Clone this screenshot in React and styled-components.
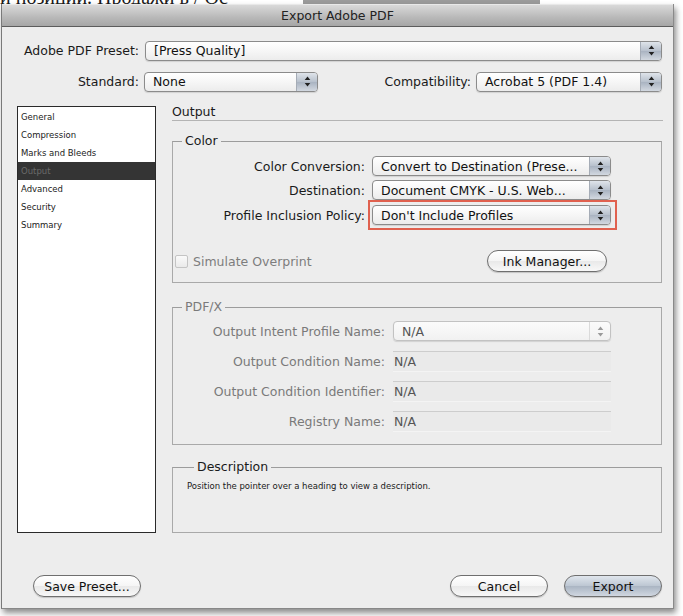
import styled, { createGlobalStyle, css } from "styled-components";

const Global = createGlobalStyle`
  html, body {
    margin: 0;
    padding: 0;
    background: #ffffff;
  }
  body {
    font-family: "DejaVu Sans", "Noto Sans", sans-serif;
    color: #1a1a1a;
  }
`;

const Page = styled.div`
  width: 683px;
  height: 616px;
  overflow: hidden;
  display: flex;
  flex-direction: column;
  background: #ffffff;
`;

/* bits of the document behind the dialog */
const Backdrop = styled.div`
  height: 4px;
  overflow: hidden;
  display: flex;
  align-items: flex-end;
  flex-shrink: 0;
`;

const BackdropText = styled.div`
  font-family: "Liberation Serif", serif;
  font-size: 20px;
  line-height: 20px;
  margin-bottom: -3px;
  white-space: nowrap;
  width: 303px;
  overflow: hidden;
`;

const BackdropBar = styled.div`
  width: 237px;
  height: 4px;
  background: #9b9b9b;
`;

const Window = styled.div`
  margin-left: 1px;
  width: 671px;
  height: 604px;
  flex-shrink: 0;
  display: flex;
  flex-direction: column;
  background: #ededed;
  border-left: 1px solid #7a7a7a;
  border-right: 1px solid #8a8a8a;
  border-bottom: 1px solid #888;
  box-shadow: 2px 4px 6px rgba(0, 0, 0, 0.45);
`;

const TitleBar = styled.div`
  height: 21px;
  flex-shrink: 0;
  display: flex;
  align-items: center;
  justify-content: center;
  font-size: 12.5px;
  color: #222;
  background: linear-gradient(#d9d9d9, #b8b8b8 60%, #a6a6a6);
  border-top: 1px solid #e8e8e8;
  border-bottom: 1px solid #5c5c5c;
`;

const Body = styled.div`
  flex: 1;
  display: flex;
  flex-direction: column;
  padding: 13px 11px 0 14px;
`;

const TopRow = styled.div`
  display: flex;
  align-items: center;
  height: 21px;
  margin-bottom: ${(p) => p.$gap || 0}px;
`;

const Label = styled.div`
  width: ${(p) => p.$w}px;
  flex-shrink: 0;
  text-align: right;
  font-size: 12.5px;
  white-space: nowrap;
  color: ${(p) => (p.$disabled ? "#7a7a7a" : "#1a1a1a")};
  margin-right: ${(p) => p.$gap ?? 6}px;
  margin-left: ${(p) => (p.$push ? "auto" : "0")};
`;

const SelectBox = styled.div`
  width: ${(p) => (p.$w ? `${p.$w}px` : "auto")};
  flex: ${(p) => (p.$w ? "0 0 auto" : "1")};
  height: 20px;
  box-sizing: border-box;
  display: flex;
  align-items: stretch;
  border: 1px solid ${(p) => (p.$disabled ? "#c2c2c2" : "#8b8b8b")};
  border-radius: 4px;
  background: ${(p) =>
    p.$disabled
      ? "linear-gradient(#fbfbfb, #f1f1f1)"
      : "linear-gradient(#ffffff, #f6f6f6 50%, #ececec)"};
  box-shadow: 0 1px 1px rgba(0, 0, 0, 0.12);
  overflow: hidden;
`;

const SelectValue = styled.div`
  flex: 1;
  display: flex;
  align-items: center;
  padding-left: 8px;
  font-size: 12.5px;
  white-space: nowrap;
  overflow: hidden;
  color: ${(p) => (p.$disabled ? "#555" : "#111")};
`;

const Stepper = styled.div`
  width: 20px;
  flex-shrink: 0;
  display: flex;
  align-items: center;
  justify-content: center;
  border-left: 1px solid ${(p) => (p.$disabled ? "#dadada" : "#a5acb6")};
  ${(p) =>
    p.$disabled
      ? css`
          background: transparent;
        `
      : css`
          background: linear-gradient(#dfe4ea, #b7c0cc 50%, #a9b3c1 51%, #d2d8e0);
        `}
`;

const Arrows = ({ disabled }) => (
  <svg width="7" height="11" viewBox="0 0 7 11">
    <path
      d="M3.5 0.5 L6.3 4 H0.7 Z M3.5 10.5 L6.3 7 H0.7 Z"
      fill={disabled ? "#9a9a9a" : "#222"}
    />
  </svg>
);

const Select = ({ value, w, disabled }) => (
  <SelectBox $w={w} $disabled={disabled}>
    <SelectValue $disabled={disabled}>{value}</SelectValue>
    <Stepper $disabled={disabled}>
      <Arrows disabled={disabled} />
    </Stepper>
  </SelectBox>
);

const Main = styled.div`
  display: flex;
  margin-top: 14px;
  gap: 16px;
`;

const SideList = styled.div`
  width: 139px;
  height: 427px;
  box-sizing: border-box;
  flex-shrink: 0;
  background: #ffffff;
  border: 1px solid #2a2a2a;
  padding-top: 1px;
  margin-left: 1px;
`;

const SideItem = styled.div`
  height: 18px;
  display: flex;
  align-items: center;
  padding-left: 3px;
  font-size: 8.5px;
  color: ${(p) => (p.$active ? "#6a6a6a" : "#222")};
  background: ${(p) => (p.$active ? "#343434" : "transparent")};
`;

const Content = styled.div`
  flex: 1;
  display: flex;
  flex-direction: column;
`;

const Heading = styled.div`
  font-size: 12.5px;
  line-height: 11px;
  padding-bottom: 3px;
  border-bottom: 1px solid #b4b4b4;
  margin-bottom: 12px;
  margin-right: -1px;
`;

const Group = styled.fieldset`
  margin: 0 0 ${(p) => p.$mb || 0}px 0;
  padding: ${(p) => p.$pad};
  border: 1px solid #a9a9a9;
  border-top-color: #9c9c9c;
  min-height: ${(p) => p.$h || 0}px;
  flex: ${(p) => (p.$fill ? 1 : "0 0 auto")};
  box-sizing: border-box;
`;

const Legend = styled.legend`
  padding: 0 3px;
  margin-left: 9px;
  font-size: 12.5px;
  line-height: 16px;
  color: ${(p) => (p.$disabled ? "#7a7a7a" : "#1a1a1a")};
`;

const FieldRow = styled.div`
  display: flex;
  align-items: center;
  height: ${(p) => p.$h || 24}px;
`;

const Highlight = styled.div`
  width: 241px;
  padding: 3px 2px 3px 2px;
  margin-left: -4px;
  border: 2px solid #e0614f;
  box-sizing: content-box;
`;

const OptionsRow = styled.div`
  display: flex;
  align-items: center;
  justify-content: space-between;
  margin-top: 22px;
  padding-right: 54px;
`;

const Check = styled.label`
  display: flex;
  align-items: center;
  gap: 5px;
  font-size: 12.5px;
  color: #7d7d7d;
  margin-left: 2px;
`;

const CheckBox = styled.span`
  width: 11px;
  height: 11px;
  border: 1px solid #c4c4c4;
  border-radius: 2px;
  background: linear-gradient(#fafafa, #eaeaea);
`;

const PillButton = styled.div`
  width: ${(p) => p.$w}px;
  height: 22px;
  box-sizing: border-box;
  display: flex;
  align-items: center;
  justify-content: center;
  font-size: 12.5px;
  color: #111;
  border: 1px solid #6f6f6f;
  border-radius: 11px;
  background: ${(p) =>
    p.$primary
      ? "linear-gradient(#e0e6ed, #bcc6d2 50%, #aab5c3 51%, #d0d7e0)"
      : "linear-gradient(#ffffff, #f5f5f5 50%, #e9e9e9 51%, #f8f8f8)"};
  box-shadow: 0 1px 1px rgba(0, 0, 0, 0.18);
`;

const TextField = styled.div`
  width: 218px;
  height: 21px;
  box-sizing: border-box;
  display: flex;
  align-items: center;
  padding-left: 1px;
  font-size: 12.5px;
  color: #555;
  background: #eaeaea;
  border-top: 1px solid #cdcdcd;
  border-bottom: 1px solid #f4f4f4;
`;

const DescText = styled.div`
  font-size: 8.5px;
  color: #1a1a1a;
  padding-left: 2px;
`;

const Footer = styled.div`
  margin-top: auto;
  display: flex;
  align-items: center;
  gap: 16px;
  padding: 0 0 11px 17px;
`;

const Spacer = styled.div`
  flex: 1;
`;

const sections = [
  "General",
  "Compression",
  "Marks and Bleeds",
  "Output",
  "Advanced",
  "Security",
  "Summary",
];

const pdfxRows = [
  { label: "Output Condition Name:", value: "N/A" },
  { label: "Output Condition Identifier:", value: "N/A" },
  { label: "Registry Name:", value: "N/A" },
];

export default function App() {
  return (
    <Page>
      <Global />
      <Backdrop>
        <BackdropText>и позиции. Продажи в / Ос</BackdropText>
        <BackdropBar />
      </Backdrop>
      <Window>
        <TitleBar>Export Adobe PDF</TitleBar>
        <Body>
          <TopRow $gap={10}>
            <Label $w={123}>Adobe PDF Preset:</Label>
            <Select value="[Press Quality]" />
          </TopRow>
          <TopRow>
            <Label $w={123} $gap={5}>
              Standard:
            </Label>
            <Select value="None" w={174} />
            <Label $w={120} $gap={5} $push>
              Compatibility:
            </Label>
            <Select value="Acrobat 5 (PDF 1.4)" w={186} />
          </TopRow>

          <Main>
            <SideList>
              {sections.map((s) => (
                <SideItem key={s} $active={s === "Output"}>
                  {s}
                </SideItem>
              ))}
            </SideList>

            <Content>
              <Heading>Output</Heading>

              <Group $pad="5px 0 10px 0" $mb={16} $h={144}>
                <Legend>Color</Legend>
                <FieldRow>
                  <Label $w={192} $gap={7}>
                    Color Conversion:
                  </Label>
                  <Select value="Convert to Destination (Prese..." w={239} />
                </FieldRow>
                <FieldRow>
                  <Label $w={192} $gap={7}>
                    Destination:
                  </Label>
                  <Select value="Document CMYK - U.S. Web..." w={239} />
                </FieldRow>
                <FieldRow $h={26}>
                  <Label $w={192} $gap={7}>
                    Profile Inclusion Policy:
                  </Label>
                  <Highlight>
                    <Select value="Don't Include Profiles" w={239} />
                  </Highlight>
                </FieldRow>
                <OptionsRow>
                  <Check>
                    <CheckBox />
                    Simulate Overprint
                  </Check>
                  <PillButton $w={120}>Ink Manager...</PillButton>
                </OptionsRow>
              </Group>

              <Group $pad="1px 0 8px 0" $mb={14} $h={145}>
                <Legend $disabled>PDF/X</Legend>
                <FieldRow $h={30}>
                  <Label $w={212} $gap={8} $disabled>
                    Output Intent Profile Name:
                  </Label>
                  <Select value="N/A" w={218} disabled />
                </FieldRow>
                {pdfxRows.map((r) => (
                  <FieldRow key={r.label} $h={30}>
                    <Label $w={212} $gap={8} $disabled>
                      {r.label}
                    </Label>
                    <TextField>{r.value}</TextField>
                  </FieldRow>
                ))}
              </Group>

              <Group $pad="6px 0 0 12px" $fill>
                <Legend>Description</Legend>
                <DescText>
                  Position the pointer over a heading to view a description.
                </DescText>
              </Group>
            </Content>
          </Main>

          <Footer>
            <PillButton $w={108}>Save Preset...</PillButton>
            <Spacer />
            <PillButton $w={98}>Cancel</PillButton>
            <PillButton $w={98} $primary>
              Export
            </PillButton>
          </Footer>
        </Body>
      </Window>
    </Page>
  );
}
